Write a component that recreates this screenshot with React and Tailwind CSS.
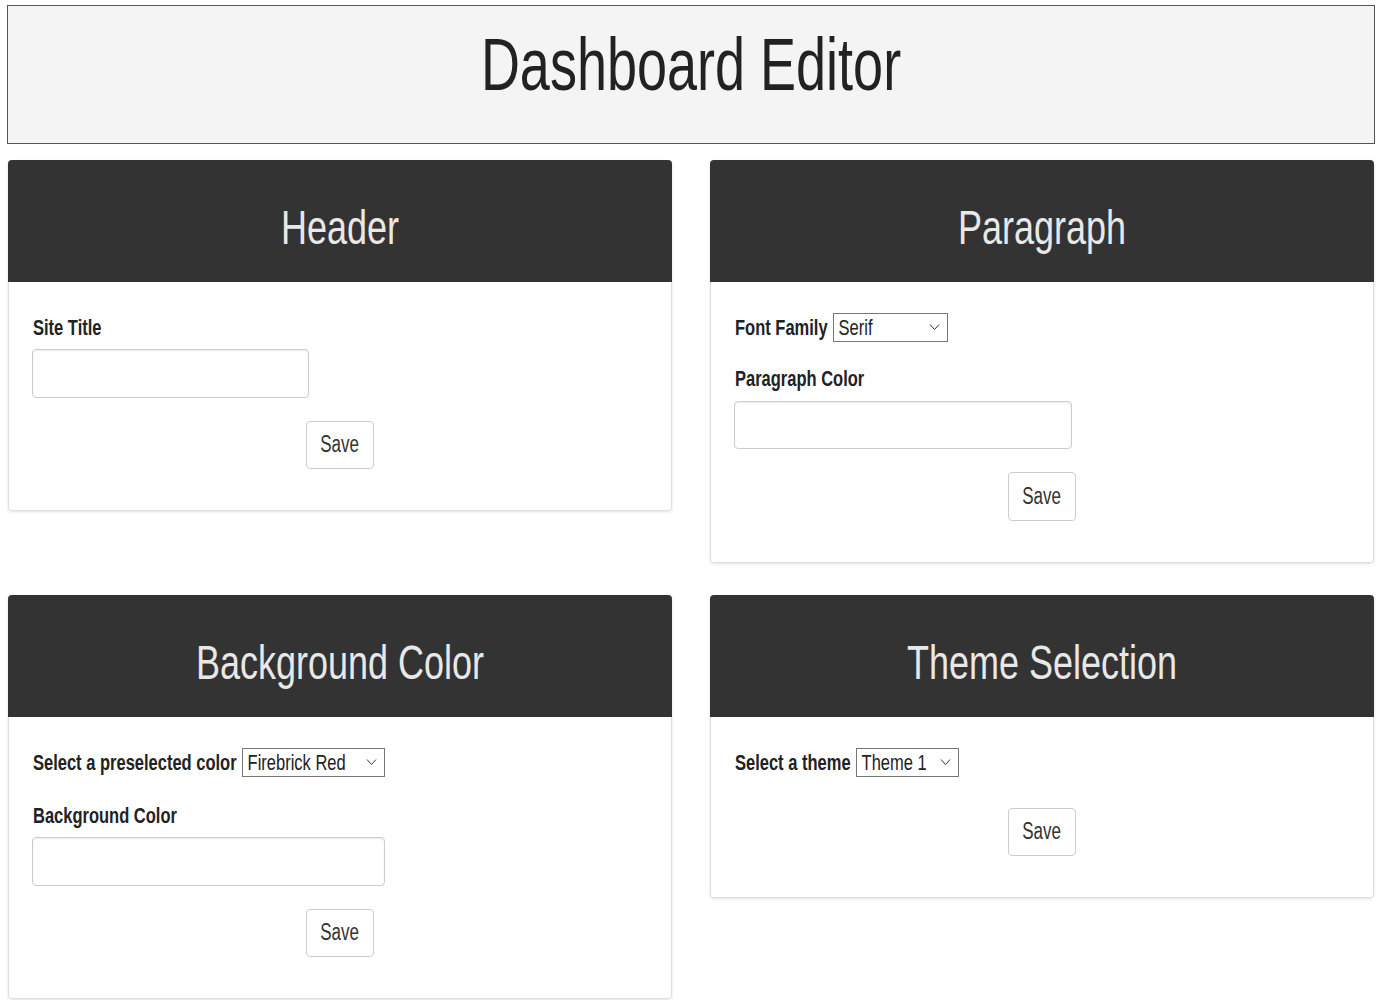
import React from "react";

// text in the reference is stretched vertically, so glyphs get a y-scale
function T({ children, className = "" }) {
  return <span className={`inline-block origin-center scale-y-[1.36] ${className}`}>{children}</span>;
}

function Chevron() {
  return (
    <svg width="11" height="8" viewBox="0 0 11 8" className="shrink-0">
      <path d="M1 1.5 L5.5 6.5 L10 1.5" fill="none" stroke="#333" strokeWidth="1" />
    </svg>
  );
}

function FakeSelect({ value, width }) {
  return (
    <div
      className={`ml-[5px] flex h-[29px] items-center justify-between border border-[#767676] bg-white pl-[5px] pr-[7px] text-[16.5px] text-[#222] ${width}`}
    >
      <T>{value}</T>
      <Chevron />
    </div>
  );
}

function Field({ label, value, width }) {
  return (
    <div className="flex h-[30px] items-center pl-px">
      <T className="text-[16.5px] font-bold text-[#222]">{label}</T>
      <FakeSelect value={value} width={width} />
    </div>
  );
}

function Label({ children, className = "" }) {
  return (
    <div className={`flex h-6 items-center pl-px ${className}`}>
      <T className="text-[16.5px] font-bold text-[#222]">{children}</T>
    </div>
  );
}

function TextInput({ className = "" }) {
  return (
    <input
      type="text"
      className={`block rounded border border-[#ccc] bg-white shadow-[inset_0_1px_2px_rgba(0,0,0,0.08)] outline-none ${className}`}
    />
  );
}

function SaveButton({ className = "" }) {
  return (
    <button className={`mx-auto flex h-12 w-[68px] items-center justify-center rounded border border-[#ccc] bg-white text-[17px] text-[#333] ${className}`}>
      <T>Save</T>
    </button>
  );
}

function Card({ title, children }) {
  return (
    <div className="overflow-hidden rounded shadow-[0_1px_3px_rgba(0,0,0,0.12)]">
      <div className="flex h-[122px] items-center justify-center bg-[#333] pt-[14px]">
        <T className="text-[36px] leading-none text-[#e8e8e8]">{title}</T>
      </div>
      <div className="rounded-b border border-t-0 border-[#dedede] bg-white pl-[23px] pr-6 pt-[30px] pb-[41px]">
        {children}
      </div>
    </div>
  );
}

export default function App() {
  return (
    <div className="min-h-screen bg-white pt-[5px] font-['Liberation_Sans',Arial,sans-serif]">
      <div className="ml-[7px] w-[1368px]">
        {/* Page title */}
        <div className="flex h-[139px] items-center justify-center border border-[#555] bg-[#f4f4f4] pb-[22px]">
          <T className="text-[54px] leading-none text-[#222]">Dashboard Editor</T>
        </div>

        <div className="mt-4 grid grid-cols-2 items-start gap-x-[38px] gap-y-8 px-px">
          <Card title="Header">
            <Label className="h-[30px]">Site Title</Label>
            <TextInput className="mt-[7px] h-[49px] w-[277px]" />
            <SaveButton className="mt-[23px]" />
          </Card>

          <Card title="Paragraph">
            <Field label="Font Family" value="Serif" width="w-[115px]" />
            <Label className="mt-6">Paragraph Color</Label>
            <TextInput className="mt-[11px] h-12 w-[338px]" />
            <SaveButton className="mt-[23px] h-[49px]" />
          </Card>

          <Card title="Background Color">
            <Field label="Select a preselected color" value="Firebrick Red" width="w-[143px]" />
            <Label className="mt-[26px]">Background Color</Label>
            <TextInput className="mt-[10px] h-[49px] w-[353px]" />
            <SaveButton className="mt-[23px]" />
          </Card>

          <Card title="Theme Selection">
            <Field label="Select a theme" value="Theme 1" width="w-[103px]" />
            <SaveButton className="mt-[31px]" />
          </Card>
        </div>
      </div>
    </div>
  );
}
